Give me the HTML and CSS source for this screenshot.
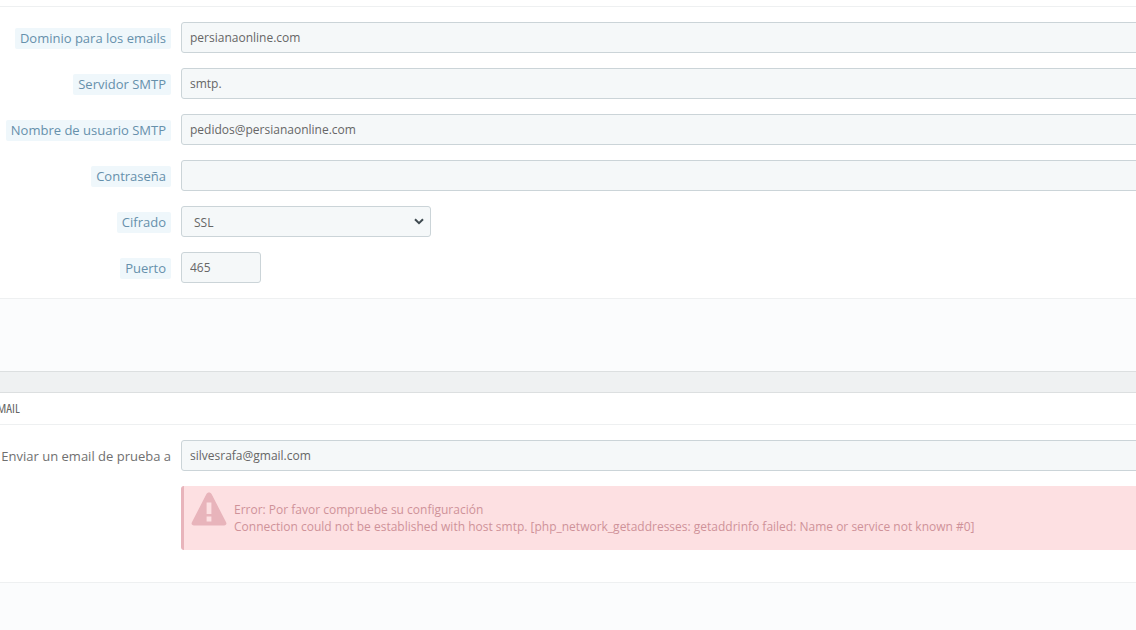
FILE: index.html
```html
<!DOCTYPE html>
<html lang="es">
<head>
<meta charset="utf-8">
<title>Configuración de email</title>
<link rel="stylesheet" href="styles.css">
</head>
<body>
<div class="page">
  <section class="panel panel-first">
    <div class="form">
      <div class="row"><label class="label"><span class="chip">Dominio para los emails</span></label><input class="field" type="text" value="persianaonline.com"></div>
      <div class="row"><label class="label"><span class="chip">Servidor SMTP</span></label><input class="field" type="text" value="smtp."></div>
      <div class="row"><label class="label"><span class="chip">Nombre de usuario SMTP</span></label><input class="field" type="text" value="pedidos@persianaonline.com"></div>
      <div class="row"><label class="label"><span class="chip">Contraseña</span></label><input class="field" type="password"></div>
      <div class="row"><label class="label"><span class="chip">Cifrado</span></label>
        <div class="select">
          <span>SSL</span>
          <svg class="chev" viewBox="0 0 10 7" width="10" height="7"><path d="M1 1.2 5 5.2 9 1.2" fill="none" stroke="#3f4a50" stroke-width="2"/></svg>
        </div>
      </div>
      <div class="row"><label class="label"><span class="chip">Puerto</span></label><input class="field field-port" type="text" value="465"></div>
    </div>
    <div class="panel-footer footer-top"></div>
  </section>
  <div class="gap"></div>
  <section class="panel">
    <h3 class="heading">Probar email</h3>
    <div class="form form-test">
      <div class="row"><label class="label label-plain">Enviar un email de prueba a</label><input class="field" type="text" value="silvesrafa@gmail.com"></div>
      <div class="row row-alert">
        <div class="alert">
          <svg class="alert-icon" viewBox="0 0 36 34" width="36" height="34"><path fill-rule="evenodd" d="M18 0.5c1.2 0 2 .6 2.7 1.8l14.4 28c.9 1.800 0 3.200-2 3.200H2.900c-2 0-2.900-1.400-2-3.200l14.400-28C16 1.100 16.800.5 18 .5zM15.600 10.500v11.500h4.800V10.500zM15.600 24.500v5h4.800v-5z" fill="#e8b4bb"/></svg>
          <div class="alert-text">
            <div>Error: Por favor compruebe su configuración</div>
            <div>Connection could not be established with host smtp. [php_network_getaddresses: getaddrinfo failed: Name or service not known #0]</div>
          </div>
        </div>
      </div>
    </div>
    <div class="panel-footer footer-bottom"></div>
  </section>
</div>
</body>
</html>
```
FILE: styles.css
```css
* { box-sizing: border-box; }
html, body { margin: 0; padding: 0; height: 630px; overflow: hidden; background: #fff; }
body { font-family: "Open Sans", "Noto Sans", sans-serif; font-size: 12px; color: #666; }
.page { width: 1300px; height: 630px; overflow: hidden; }
.panel-first { padding-top: 6px; }
.form { border-top: 1px solid #eef0f1; padding: 15px 0; display: flex; flex-direction: column; gap: 15px; }
.row { display: flex; align-items: center; gap: 10px; height: 31px; }
.label { width: 171px; flex: none; text-align: right; font-size: 13px; white-space: nowrap; }
.chip { background: #eff7fb; color: #6690ab; padding: 1px 5px 2px 5px; border-radius: 2px; }
.label-plain { color: #707070; }
.field { flex: 1; height: 31px; border: 1px solid #cbd4d8; border-radius: 3px; background: #f5f8f9; padding: 0 8px 0 8px; font: 12px "Open Sans", sans-serif; color: #666; outline: none; }
.field-port { flex: none; width: 80px; }
.select { width: 250px; height: 31px; border: 1px solid #cbd4d8; border-radius: 3px; background: #f5f8f9; padding: 1px 6px 0 12px; display: flex; align-items: center; justify-content: space-between; font-size: 12px; color: #666; }
.chev { margin-top: -2px; }
.panel-footer { background: #fbfcfd; border-top: 1px solid #eef0f1; }
.footer-top { height: 74px; border-bottom: 1px solid #dcdfe0; }
.gap { height: 21px; background: #eff1f2; border-bottom: 1px solid #dcdfe0; }
.heading { margin: 0 0 0 -47px; height: 31px; padding: 7px 0 0 0; font: 400 13px "Open Sans", sans-serif; font-stretch: 75%; text-transform: uppercase; color: #666; line-height: 16px; }
.form-test { border-top: 1px solid #eef0f1; padding-bottom: 32px; }
.row-alert { height: 64px; justify-content: flex-end; }
.alert { margin-left: 181px; flex: 1; align-self: stretch; background: #fde0e2; border-left: 3px solid #e8b4bb; border-radius: 3px 0 0 3px; display: flex; align-items: center; padding: 0 0 0 7px; color: #cf9299; }
.alert-icon { flex: none; margin: -18px 7px 0 0; }
.alert-text { line-height: 17px; font-size: 12px; white-space: nowrap; }
.footer-bottom { height: 60px; }
```
